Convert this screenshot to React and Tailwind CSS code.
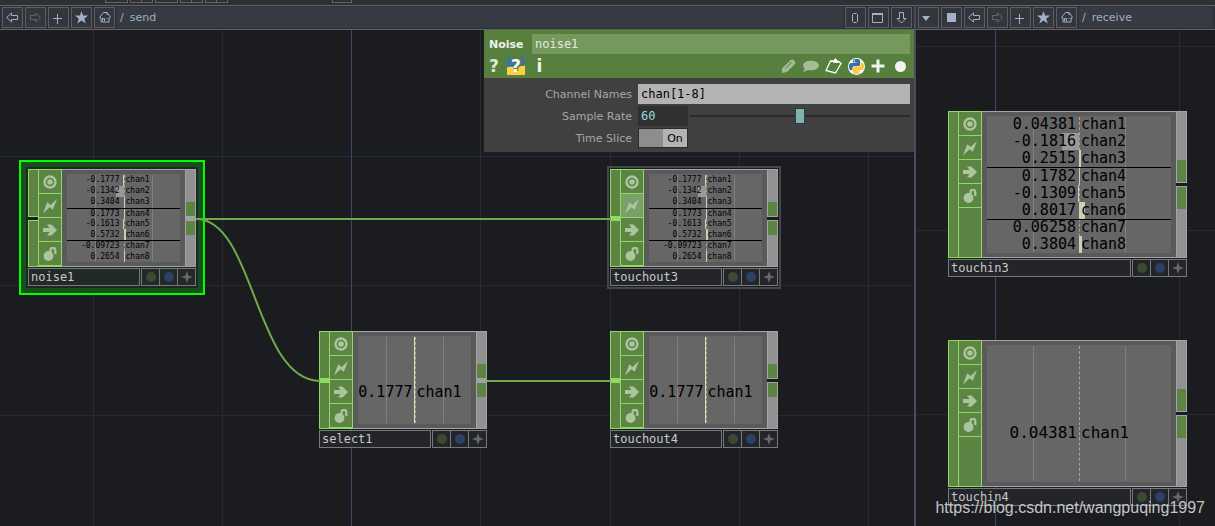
import { useState } from 'react'

const NOISE = [
  ['chan1', '-0.1777'],
  ['chan2', '-0.1342'],
  ['chan3', '0.3404'],
  ['chan4', '0.1773'],
  ['chan5', '-0.1613'],
  ['chan6', '0.5732'],
  ['chan7', '-0.09723'],
  ['chan8', '0.2654'],
]

const RECEIVED = [
  ['chan1', '0.04381'],
  ['chan2', '-0.1816'],
  ['chan3', '0.2515'],
  ['chan4', '0.1782'],
  ['chan5', '-0.1309'],
  ['chan6', '0.8017'],
  ['chan7', '0.06258'],
  ['chan8', '0.3804'],
]

/* ---------- toolbar ---------- */

const TOOL_ICONS = {
  back: <path d="M.5 6.500l5-4.500v2.500h6v4h-6V11z" fill="none" stroke="currentColor" />,
  forward: <path d="M11.5 6.500l-5-4.500v2.500h-5v4h5V11z" fill="none" stroke="currentColor" />,
  down: <path d="M6.500 12L2 7.500h2.500v-6h4v6H11z" fill="none" stroke="currentColor" />,
  add: <path d="M5.500 3v10M1 7.500h9" stroke="currentColor" />,
  star: <path d="M6.500 0L8 4.600h5L9.200 7.700l1.600 4.800-4.300-3-4.300 3 1.600-4.800L0 4.600h5z" fill="currentColor" />,
  home: (
    <path d="M1.500 6.500l4-5h3.500l3 4v1.500h-1v4h-8v-4zM4.500 10V7.500h2V10M8.500 7.500h1M9 1v3" fill="none" stroke="currentColor" />
  ),
  menu: <path d="M0 5h8L4 10z" fill="currentColor" />,
  stop: <path d="M2 2h9v9H2z" fill="currentColor" />,
  zero: <path d="M4.500 2.500h3l1 1v7l-1 1h-3l-1-1v-7z" fill="none" stroke="currentColor" />,
  window: <path d="M.5 3v8.500h10V3M0 3.500h11M0 2.500h11" fill="none" stroke="currentColor" />,
}

function ToolButton({ icon, label, disabled }) {
  return (
    <button
      aria-label={label}
      disabled={disabled}
      className="flex size-[21px] shrink-0 items-center justify-center border border-[#5c5d61] bg-[#33363d] text-[#a3b1cb] disabled:text-[#62666e]"
    >
      <svg viewBox="0 0 13 13" className="size-[13px] overflow-visible">{TOOL_ICONS[icon]}</svg>
    </button>
  )
}

function Toolbar({ path, before, after }) {
  return (
    <div className="flex gap-[2px] border-y border-[#626366] bg-[#2f3136] px-[2px] py-px">
      {before}
      <ToolButton icon="back" label="Back" />
      <ToolButton icon="forward" label="Forward" disabled />
      <ToolButton icon="add" label="Add" />
      <ToolButton icon="star" label="Bookmarks" />
      <ToolButton icon="home" label="Home" />
      <nav className="flex min-w-0 flex-1 items-center gap-1.5 bg-[#363a43] pt-0.5 pl-[3px] text-[11px] text-[#a3adbd]">
        <a href="#root">/</a>
        <a href={`#${path}`}>{path}</a>
      </nav>
      {after}
    </div>
  )
}

/* ---------- operators ---------- */

function FlagButton({ label, active, children }) {
  return (
    <button
      aria-label={label}
      className={`flex h-6 w-full items-center justify-center border-b border-[#8fd964] text-[#abc59d] ${active ? 'bg-[#7b9f69]' : ''}`}
    >
      <svg viewBox="0 0 14 14" className="size-[14px]" fill="currentColor">{children}</svg>
    </button>
  )
}

function Flags({ activeFlag }) {
  return (
    <div className="w-6 shrink-0 border-x border-[#8fd964] bg-[#5c8442]">
      <FlagButton label="Viewer active">
        <circle cx="7" cy="7" r="5.500" fill="none" stroke="currentColor" strokeWidth="2.400" />
        <circle cx="7" cy="7" r="2.800" />
      </FlagButton>
      <FlagButton label="Bypass" active={activeFlag === 'bypass'}>
        <path d="M14 0L9.800 10.800 6.500 8.300 0 14.500 4.200 3.200 7.600 5.900z" />
      </FlagButton>
      <FlagButton label="Export">
        <path d="M0 5h6.500L4 1.500h4.500L14 7l-5.500 5.500H4L6.500 9H0z" />
      </FlagButton>
      <FlagButton label="Lock">
        <circle cx="5.500" cy="9" r="4.900" />
        <path d="M7.500 5V3.200a2.300 2.300 0 014.800 0V7" fill="none" stroke="currentColor" strokeWidth="2.300" />
      </FlagButton>
    </div>
  )
}

function InputBar({ kind, large }) {
  if (kind === 'split') {
    return (
      <div className="flex w-2.5 shrink-0 flex-col gap-[3px] bg-[#1b1c20]">
        <div className="flex-1 border border-r-0 border-[#8fd964] bg-[#5c8442]" />
        <div className="flex-1 border border-r-0 border-[#8fd964] bg-[#5c8442]" />
      </div>
    )
  }
  return (
    <div className="flex w-2.5 shrink-0 flex-col justify-center border border-r-0 border-[#8fd964] bg-[#5c8442]">
      {!large && <div className="h-[5px] bg-[#8fd964]" />}
    </div>
  )
}

function OutputBar({ connected, large }) {
  const pad = large ? 'h-[22px]' : 'h-[14px]'
  return (
    <div className={`flex w-[11px] shrink-0 flex-col gap-[3px] ${connected ? 'bg-[#a0a0a4]' : 'bg-[#1b1c20]'}`}>
      <div className="flex flex-1 flex-col justify-end border border-[#a3a3a8] bg-[#919191]">
        <div className={`${pad} bg-[#5c8442]`} />
      </div>
      <div className="flex-1 border border-[#a3a3a8] bg-[#919191]">
        <div className={`${pad} bg-[#5c8442]`} />
      </div>
    </div>
  )
}

function ValueBar({ value, large }) {
  const width = Math.round(Math.abs(value) * (large ? 7.5 : 4))
  return (
    <div
      className={`absolute inset-y-0 bg-[#cdcfb4] ${value < 0 ? 'right-1/2' : 'left-1/2'}`}
      style={{ width }}
    />
  )
}

function ChannelTable({ channels, large }) {
  return (
    <div className={`grid h-full grid-rows-8 font-['DejaVu_Sans_Mono',monospace] ${large ? 'text-[15px]' : 'pt-px text-[8px]'}`}>
      {channels.map(([name, value], i) => (
        <div
          key={name}
          className={`relative grid grid-cols-2 items-center leading-none ${i === 3 || i === 6 ? 'border-t border-black' : ''}`}
        >
          {name === 'chan2' ? (
            <div className={`absolute inset-y-0 right-1/2 bg-[#999999] ${large ? 'w-[17px]' : 'w-2'}`} />
          ) : (
            <ValueBar value={Number(value)} large={large} />
          )}
          <span className={`relative text-right ${large ? 'pr-[3px]' : 'pr-1'}`}>{value}</span>
          <span className="relative pl-0.5">{name}</span>
        </div>
      ))}
    </div>
  )
}

function SingleChannel({ name, value, large }) {
  return (
    <div
      className={`grid h-full grid-cols-2 items-center whitespace-nowrap font-['DejaVu_Sans_Mono',monospace] leading-none ${large ? 'pt-[38px] text-[16px]' : 'pt-6 text-[15px]'}`}
    >
      <span className="justify-self-end pr-0.5">{value}</span>
      <span className="pl-0.5">{name}</span>
    </div>
  )
}

function Viewer({ channels, large }) {
  const single = channels.length === 1
  return (
    <div className="min-w-0 flex-1 border-y border-[#a3a3a8] bg-[#5a5a5a] px-[5px] py-1">
      <div className="relative h-full bg-[#666666] text-black">
        <div className="absolute inset-y-px left-1/4 w-px bg-[#808080]" />
        <div className="absolute inset-y-px left-3/4 w-px bg-[#808080]" />
        <div className="absolute inset-y-px left-1/2 border-l border-dashed border-[#a5a598]" />
        {single && !large && <div className="absolute inset-y-px right-1/2 w-px bg-[#dcdcb8]" />}
        <div className="relative h-full">
          {single ? (
            <SingleChannel name={channels[0][0]} value={channels[0][1]} large={large} />
          ) : (
            <ChannelTable channels={channels} large={large} />
          )}
        </div>
      </div>
    </div>
  )
}

function Operator({ name, channels, large, input = 'single', connected, activeFlag }) {
  const cell = 'flex w-[18px] items-center justify-center border-r border-y border-[#77787b] bg-[#26282a]/80'
  return (
    <div className={large ? 'w-[239px]' : 'w-[168px]'}>
      <div className={`flex ${large ? 'h-[147px]' : 'h-[98px]'}`}>
        <InputBar kind={input} large={large} />
        <div className="flex border-y border-[#8fd964] bg-[#5c8442]">
          <Flags activeFlag={activeFlag} />
        </div>
        <Viewer channels={channels} large={large} />
        <OutputBar connected={connected} large={large} />
      </div>
      <div className="mt-px flex h-[18px]">
        <div className="flex min-w-0 flex-1 items-center border border-[#77787b] bg-[#26282a]/80 pl-0.5 font-['DejaVu_Sans_Mono',monospace] text-[12px] leading-none text-[#c9c9c9]">
          {name}
        </div>
        <div className="ml-px flex border-l border-[#77787b]">
          <button aria-label={`Display ${name}`} className={cell}>
            <span className="size-2.5 rounded-full bg-[#3c4a34]" />
          </button>
          <button aria-label={`Render ${name}`} className={cell}>
            <span className="size-2.5 rounded-full bg-[#2d4066]" />
          </button>
          <button aria-label={`Activate ${name}`} className={cell}>
            <svg viewBox="0 0 12 12" className="size-3">
              <path d="M6 0l1.500 4.500L12 6 7.500 7.500 6 12 4.500 7.500 0 6l4.500-1.500z" fill="#66686b" />
            </svg>
          </button>
        </div>
      </div>
    </div>
  )
}

function Grid({ columns, rows, axis, rowAxis }) {
  return (
    <svg className="absolute inset-0 size-full" aria-hidden="true">
      {rows.map((y) => (
        <path key={y} d={`M0 ${y}.5H4000`} stroke={y === rowAxis ? '#282a42' : '#292a30'} />
      ))}
      {columns.map((x) => (
        <path key={x} d={`M${x}.5 0V4000`} stroke={x === axis ? '#45436a' : '#292a30'} />
      ))}
    </svg>
  )
}

/* ---------- parameter window ---------- */

const PYTHON_HALF =
  'M14.25.18l.9.2.73.26.59.3.45.32.34.34.25.34.16.33.1.3.04.26.02.2-.01.13V8.5l-.05.63-.13.55-.21.46-.26.38-.3.31-.33.25-.35.19-.35.14-.33.1-.3.07-.26.04-.21.02H8.77l-.69.05-.59.14-.5.22-.41.27-.33.32-.27.35-.2.36-.15.37-.1.35-.07.32-.04.27-.02.21v3.06H3.17l-.21-.03-.28-.07-.32-.12-.35-.18-.36-.26-.36-.36-.35-.46-.32-.59-.28-.73-.21-.88-.14-1.05-.05-1.23.06-1.22.16-1.04.24-.87.32-.71.36-.57.4-.44.42-.33.42-.24.4-.16.36-.1.32-.05.24-.01h.16l.06.01h8.16v-.83H6.18l-.01-2.75-.02-.37.05-.34.11-.31.17-.28.25-.26.31-.23.38-.2.44-.18.51-.15.58-.12.64-.1.71-.06.77-.04.84-.02 1.27.05zm-6.3 1.98l-.23.33-.08.41.08.41.23.34.33.22.41.09.41-.09.33-.22.23-.34.08-.41-.08-.41-.23-.33-.33-.22-.41-.09-.41.09z'

function HeaderIcons() {
  return (
    <div className="flex h-6 items-center pr-[5px] text-[#f0f3ee]">
      <button aria-label="Help" className="w-5 text-[17px] leading-none font-bold text-[#dfe6da]">?</button>
      <button
        aria-label="Python help"
        className="relative ml-[3px] flex size-[18px] items-center justify-center text-[17px] leading-none font-bold text-white"
      >
        <svg viewBox="0 0 18 18" className="absolute inset-0 size-[18px]" aria-hidden="true">
          <path d="M0 0h18v18H0z" fill="#3a73a5" />
          <path d="M0 10.500c5-2 8 .5 18-2V18H0z" fill="#ffcf43" />
          <path d="M5 5c1-4 8-4 8 0 0 3-4 3-4 6v3" fill="none" stroke="#577f3e" strokeWidth="4.500" />
        </svg>
        <span className="relative">?</span>
      </button>
      <button aria-label="Info" className="w-[25px] pl-1 text-[17px] leading-none font-bold">i</button>
      <div className="ml-auto flex items-center gap-1.5">
        <button aria-label="Edit">
          <svg viewBox="0 0 14 14" className="size-[14px]" fill="#a5bb96">
            <path d="M0 14V9.500L8.500 1 11 .5l2.500 2.500L13 5l-8 8z" />
            <path d="M3.500 9.500l6-6.500" stroke="#577f3e" />
          </svg>
        </button>
        <button aria-label="Comment">
          <svg viewBox="0 0 17 13" className="h-[13px] w-[17px]" fill="#a5bb96">
            <ellipse cx="9" cy="5.500" rx="8" ry="4.800" />
            <path d="M3.500 7L1 12l6.500-2.500z" />
          </svg>
        </button>
        <button aria-label="Copy parameters">
          <svg viewBox="0 0 17 16" className="h-4 w-[17px]" fill="none" stroke="#ffffff">
            <path d="M5.500 3L1 12.500l9.500 2.500L16 5.500 13.500 3.500z" strokeWidth="1.300" />
            <path d="M8 4L10.500.5 13 4.500z" fill="#ffffff" />
          </svg>
        </button>
        <button aria-label="Python" className="flex size-[17px] items-center justify-center rounded-full bg-white">
          <svg viewBox="0 0 24 24" className="size-[15px]">
            <path d={PYTHON_HALF} fill="#3973a5" />
            <path d={PYTHON_HALF} fill="#ffc83d" transform="rotate(180 12 12)" />
          </svg>
        </button>
        <button aria-label="Add parameter">
          <svg viewBox="0 0 14 14" className="size-[14px]">
            <path d="M7 .5v13M.5 7h13" stroke="currentColor" strokeWidth="3" />
          </svg>
        </button>
        <button aria-label="Pin" className="flex w-[18px] justify-center">
          <span className="size-[11px] rounded-full bg-[#f0f3ee]" />
        </button>
      </div>
    </div>
  )
}

function ParameterWindow() {
  const [name, setName] = useState('noise1')
  const [channels, setChannels] = useState('chan[1-8]')
  const [rate, setRate] = useState(60)
  const [slice, setSlice] = useState(true)
  const row = 'grid grid-cols-[148px_1fr] items-center gap-1.5'
  const label = 'pt-0.5 text-right text-[11px] text-[#a6a6a6]'

  return (
    <section className="absolute top-0 right-0 w-[430px] bg-[#404040]">
      <header className="bg-[#577f3e] pt-1">
        <div className="flex items-center pr-1 pl-[5px]">
          <label htmlFor="op-name" className="w-[43px] pt-0.5 text-[11px] font-bold text-[#eef1ec]">Noise</label>
          <input
            id="op-name"
            value={name}
            onChange={(e) => setName(e.target.value)}
            className="h-5 min-w-0 flex-1 bg-[#75995d] px-[3px] font-['DejaVu_Sans_Mono',monospace] text-[12px] text-[#e3eadf] outline-none"
          />
        </div>
        <HeaderIcons />
      </header>
      <div className="flex flex-col gap-0.5 pt-1.5 pr-1 pb-1">
        <div className={row}>
          <label htmlFor="channel-names" className={label}>Channel Names</label>
          <input
            id="channel-names"
            value={channels}
            onChange={(e) => setChannels(e.target.value)}
            className="h-5 min-w-0 bg-[#b3b3b3] px-[3px] font-['DejaVu_Sans_Mono',monospace] text-[12px] text-black outline-none"
          />
        </div>
        <div className={row}>
          <label htmlFor="sample-rate" className={label}>Sample Rate</label>
          <div className="flex items-center gap-0.5">
            <input
              id="sample-rate"
              value={rate}
              onChange={(e) => setRate(e.target.value)}
              className="h-5 w-[50px] bg-[#303030] px-[3px] font-['DejaVu_Sans_Mono',monospace] text-[12px] text-[#98dcdc] outline-none"
            />
            <input
              type="range"
              aria-label="Sample rate slider"
              min="0"
              max="120"
              value={rate}
              onChange={(e) => setRate(e.target.value)}
              className="h-4 min-w-0 flex-1 appearance-none bg-transparent [&::-webkit-slider-runnable-track]:h-0.5 [&::-webkit-slider-runnable-track]:bg-[#2b2b2b] [&::-webkit-slider-thumb]:-mt-[7px] [&::-webkit-slider-thumb]:h-4 [&::-webkit-slider-thumb]:w-2.5 [&::-webkit-slider-thumb]:appearance-none [&::-webkit-slider-thumb]:border [&::-webkit-slider-thumb]:border-[#303a3a] [&::-webkit-slider-thumb]:bg-[#80b1b3]"
            />
          </div>
        </div>
        <div className={row}>
          <label htmlFor="time-slice" className={label}>Time Slice</label>
          <label className="flex h-5 w-[50px] border border-[#2c2c2c] bg-[#b3b3b3] text-[11px] text-black">
            <input
              id="time-slice"
              type="checkbox"
              checked={slice}
              onChange={(e) => setSlice(e.target.checked)}
              className="h-full w-6 appearance-none bg-[#8d8d8d]"
            />
            <span className="flex flex-1 items-center justify-center pt-0.5">{slice ? 'On' : 'Off'}</span>
          </label>
        </div>
      </div>
    </section>
  )
}

/* ---------- panes ---------- */

function SendPane() {
  return (
    <section className="flex min-w-0 flex-col">
      <Toolbar
        path="send"
        after={
          <>
            <ToolButton icon="zero" label="Layout 0" />
            <ToolButton icon="window" label="Maximize" />
            <ToolButton icon="down" label="Collapse" />
          </>
        }
      />
      <div className="relative flex-1 overflow-hidden">
        <Grid columns={[93, 222, 351, 480, 610, 739, 868]} rows={[126, 255, 385]} axis={351} rowAxis={126} />
        <div className="absolute top-[130px] left-[19px] border-2 border-[#00ff00] bg-[#164f1b] p-[5px]">
          <div className="bg-[#1b2a20] p-0.5">
            <Operator name="noise1" channels={NOISE} input="split" connected />
          </div>
        </div>
        <div className="absolute top-[136px] left-[607px] border-2 border-[#46474d] p-px">
          <Operator name="touchout3" channels={NOISE} activeFlag="bypass" />
        </div>
        <div className="absolute top-[301px] left-[319px]">
          <Operator name="select1" channels={[['chan1', '0.1777']]} connected />
        </div>
        <div className="absolute top-[301px] left-[610px]">
          <Operator name="touchout4" channels={[['chan1', '0.1777']]} />
        </div>
        <svg className="pointer-events-none absolute inset-0 size-full" fill="none" stroke="#70aa49" strokeWidth="2">
          <path d="M196 189H611" />
          <path d="M196 189C255 189 255 351 320 351" />
          <path d="M487 351H611" />
        </svg>
        <ParameterWindow />
      </div>
    </section>
  )
}

function ReceivePane() {
  return (
    <section className="flex min-w-0 flex-col">
      <Toolbar
        path="receive"
        before={
          <>
            <ToolButton icon="menu" label="Pane menu" />
            <ToolButton icon="stop" label="Pane type" />
          </>
        }
      />
      <div className="relative flex-1 overflow-hidden">
        <Grid columns={[79, 263]} rows={[16, 200, 384]} axis={79} />
        <div className="absolute top-[81px] left-8">
          <Operator name="touchin3" channels={RECEIVED} large />
        </div>
        <div className="absolute top-[310px] left-8">
          <Operator name="touchin4" channels={[['chan1', '0.04381']]} large />
        </div>
      </div>
    </section>
  )
}

function TopStrip() {
  const box = 'h-[3px] w-[23px] border border-t-0 border-[#626366]'
  return (
    <div className="flex h-[5px] bg-[#2f3033] pl-[105px]">
      <div className="flex gap-0.5">
        {[0, 1, 2, 3, 4].map((i) => (
          <div key={i} className={`${box} flex justify-center`}>
            {i !== 0 && i !== 2 && <div className="w-px bg-[#626366]" />}
          </div>
        ))}
      </div>
      <div className="ml-[104px] h-[3px] w-5 border border-t-0 border-[#626366]" />
    </div>
  )
}

export default function App() {
  return (
    <main className="relative flex h-screen flex-col overflow-hidden bg-[#1b1c20] font-['DejaVu_Sans',sans-serif]">
      <TopStrip />
      <div className="grid flex-1 grid-cols-[1fr_299px] gap-0.5 bg-[#4c4a60] *:bg-[#1b1c20]">
        <SendPane />
        <ReceivePane />
      </div>
      <p className="pointer-events-none absolute right-2.5 bottom-1.5 font-['Liberation_Sans',sans-serif] text-[16px] text-[#c4c4c6]">
        https://blog.csdn.net/wangpuqing1997
      </p>
    </main>
  )
}
